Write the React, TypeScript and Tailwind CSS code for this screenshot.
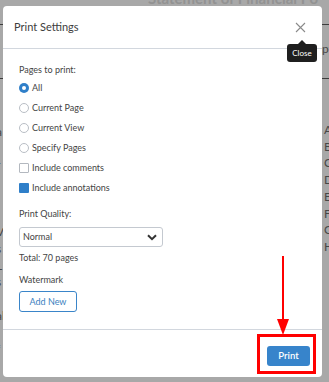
import React from "react";

const Radio = ({ checked, label }: { checked?: boolean; label: string }) => (
    <div className="h-[20px] flex items-center gap-[3px]">
        {checked ? (
            <span className="w-[10px] h-[10px] rounded-full bg-[#2f7fc9] flex items-center justify-center">
                <span className="w-[4px] h-[4px] rounded-full bg-white" />
            </span>
        ) : (
            <span className="w-[10px] h-[10px] rounded-full border border-[#b9bec5] bg-white" />
        )}
        <span>{label}</span>
    </div>
);

const Check = ({ checked, label }: { checked?: boolean; label: string }) => (
    <div className="h-[20px] flex items-center gap-[3px]">
        {checked ? (
            <span className="w-[10px] h-[10px] rounded-[1px] bg-[#2f7fc9]" />
        ) : (
            <span className="w-[10px] h-[10px] rounded-[1px] border border-[#b3b8bf] bg-white" />
        )}
        <span>{label}</span>
    </div>
);

const App = () => {
    return (
        <div className="relative w-[329px] h-[382px] overflow-hidden bg-[#a8a8a8] pt-[6px] pl-[3px] font-['Lato',sans-serif]">
            {/* document behind the overlay */}
            <div className="absolute inset-0 text-[#474747]">
                <div className="absolute left-[148px] -top-[13px] text-[15px] font-bold text-[#929292] whitespace-nowrap">Statement of Financial Po</div>
                <div className="absolute left-0 right-0 top-[24px] h-px bg-[#3c3c3c]" />
                <div className="absolute left-0 right-0 top-[78px] h-px bg-[#3c3c3c]" />
                <div className="absolute left-[322px] top-[40px] text-[12px]">pt</div>
                <div className="absolute left-[324px] top-[122px] flex flex-col text-[12px] leading-[16.7px]">
                    <span>A</span><span>B</span><span>C</span><span>D</span><span>E</span><span>F</span><span>G</span><span>H</span>
                </div>
                <div className="absolute -left-[4px] top-[124px] flex flex-col text-[12px] leading-[16.7px]">
                    <span>a</span><span>&nbsp;</span><span>r</span><span>&nbsp;</span><span>&nbsp;</span><span>&nbsp;</span><span>V</span><span>s</span><span>L</span><span>s</span><span>&nbsp;</span><span>al</span><span>&nbsp;</span><span>f</span>
                </div>
            </div>

            {/* modal */}
            <div className="relative z-10 w-[319px] h-[371px] bg-white rounded-[4px] flex flex-col text-[#444]">
                {/* Header */}
                <div className="relative h-[43px] shrink-0 flex items-center justify-between pl-[11px] pr-[16px] border-b border-[#d2d7de]">
                    <div className="text-[11px] text-[#3d3d3d]">Print Settings</div>
                    <svg width="11" height="11" viewBox="0 0 11 11" className="text-[#8a8a8a]">
                        <path d="M1 1 L10 10 M10 1 L1 10" stroke="currentColor" strokeWidth="1.1" />
                    </svg>
                    <div className="absolute left-[284px] top-[38px] w-[30px] h-[18px] bg-[#1f1f1f] rounded-[3px] flex items-center justify-center text-white text-[8px]">
                        <span className="absolute -top-[4px] left-[11px] w-0 h-0 border-l-[4px] border-r-[4px] border-b-[4px] border-l-transparent border-r-transparent border-b-[#1f1f1f]" />
                        Close
                    </div>
                </div>

                {/* Body */}
                <div className="flex-1 px-[16px] pt-[13px] text-[9px] leading-[16px]">
                    <div>Pages to print:</div>
                    <Radio checked label="All" />
                    <Radio label="Current Page" />
                    <Radio label="Current View" />
                    <Radio label="Specify Pages" />
                    <Check label="Include comments" />
                    <Check checked label="Include annotations" />

                    <div className="mt-[8px]">Print Quality:</div>
                    <div className="mt-[5px] w-[144px] h-[20px] border border-[#c4c9d0] rounded-[3px] flex items-center justify-between pl-[3px] pr-[5px]">
                        <span>Normal</span>
                        <svg width="10" height="7" viewBox="0 0 10 7">
                            <path d="M1 1.2 L5 5.2 L9 1.2" fill="none" stroke="#333" strokeWidth="2" />
                        </svg>
                    </div>
                    <div className="mt-[3px]">Total: 70 pages</div>
                    <div className="mt-[6px]">Watermark</div>
                    <button className="mt-[3px] w-[58px] h-[21px] border border-[#3a85c9] rounded-[3px] text-[#3a7fc0] text-[9px] bg-white">
                        Add New
                    </button>
                </div>

                {/* Footer */}
                <div className="h-[48px] shrink-0 border-t border-[#d2d7de] flex items-center justify-end pr-[12px]">
                    <div className="relative">
                        <button className="w-[43px] h-[20px] bg-[#3784cb] rounded-[3px] text-white text-[9.5px] font-semibold">
                            Print
                        </button>
                        <div className="absolute -left-[10px] -right-[6px] -top-[7px] -bottom-[8px] border-[3px] border-[#ff0000]" />
                    </div>
                </div>

                {/* annotation arrow */}
                <svg className="absolute left-[274px] top-[250px]" width="12" height="79" viewBox="0 0 12 79">
                    <path d="M6 0 V66" stroke="#ff0000" strokeWidth="2" />
                    <path d="M0 63 L12 63 L6 79 Z" fill="#ff0000" />
                </svg>
            </div>
        </div>
    );
};

export default App;
